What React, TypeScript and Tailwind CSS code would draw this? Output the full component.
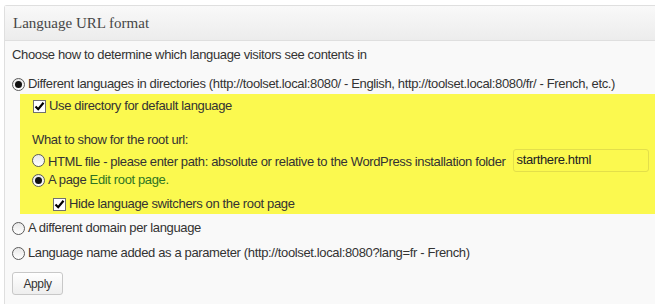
import React from "react";

const Radio = ({ checked }: { checked?: boolean }) => (
  <span className="flex h-[13px] w-[13px] shrink-0 items-center justify-center rounded-full border border-[#5a5a5a] bg-gradient-to-b from-[#e8e8e8] to-white">
    {checked && <span className="h-[7px] w-[7px] rounded-full bg-[#111]" />}
  </span>
);

const Check = () => (
  <span className="flex h-[13px] w-[13px] shrink-0 items-center justify-center border border-[#707070] bg-white">
    <svg width="11" height="11" viewBox="0 0 11 11">
      <path d="M1.5 5.5 L4.2 8.2 L9.5 1.8" fill="none" stroke="#000" strokeWidth="2.2" />
    </svg>
  </span>
);

export default function App() {
  return (
    <div
      className="h-[304px] w-[655px] overflow-hidden whitespace-nowrap bg-white pl-[4px] pt-[5px] text-[13px] tracking-[-0.36px] text-[#333]"
      style={{ fontFamily: '"Liberation Sans", Arial, sans-serif' }}
    >
      <div className="h-[299px] w-[651px] rounded-tl-[3px] border border-r-0 border-b-0 border-[#dfdfdf] bg-[#f9f9f9]">
        <div className="flex h-[35px] items-center border-b border-[#dfdfdf] bg-gradient-to-b from-[#f9f9f9] to-[#ececec] pl-[8px]">
          <span
            className="text-[15px] leading-none tracking-normal text-[#464646]"
            style={{ fontFamily: '"Liberation Serif", Georgia, serif' }}
          >
            Language URL format
          </span>
        </div>
        <div className="pl-[7px] pt-[6px]">
          <div className="h-[16px] leading-[16px]">
            Choose how to determine which language visitors see contents in
          </div>
          <div className="mt-[13px] flex h-[16px] items-center gap-[3px] leading-[16px]">
            <Radio checked />
            <span>
              Different languages in directories (http://toolset.local:8080/ - English,
              http://toolset.local:8080/fr/ - French, etc.)
            </span>
          </div>
          <div className="ml-[8px] mt-[2px] h-[120px] w-[640px] bg-[#fbf94f] pl-[13px] pt-[4px]">
            <div className="flex h-[16px] items-center gap-[3px] leading-[16px]">
              <Check />
              <span>Use directory for default language</span>
            </div>
            <div className="ml-[-1px] mt-[18px] h-[16px] leading-[16px]">What to show for the root url:</div>
            <div className="ml-[-1px] flex h-[24px] items-center gap-[3px]">
              <Radio />
              <span className="mt-[3px] shrink-0 leading-[16px]">
                HTML file - please enter path: absolute or relative to the WordPress installation folder
              </span>
              <span className="ml-[4px] flex h-[23px] w-[136px] shrink-0 items-center rounded-[3px] border border-[#e3df4a] pl-[3px] text-[#222]">
                starthere.html
              </span>
            </div>
            <div className="ml-[-1px] flex h-[16px] items-center gap-[3px] leading-[16px]">
              <Radio checked />
              <span>
                A page <span className="text-[#2f7423]">Edit root page.</span>
              </span>
            </div>
            <div className="ml-[20px] mt-[8px] flex h-[16px] items-center gap-[3px] leading-[16px]">
              <Check />
              <span>Hide language switchers on the root page</span>
            </div>
          </div>
          <div className="mt-[6px] flex h-[16px] items-center gap-[3px] leading-[16px]">
            <Radio />
            <span>A different domain per language</span>
          </div>
          <div className="mt-[9px] flex h-[16px] items-center gap-[3px] leading-[16px]">
            <Radio />
            <span>Language name added as a parameter (http://toolset.local:8080?lang=fr - French)</span>
          </div>
          <button className="mt-[11px] flex h-[23px] w-[51px] items-center justify-center rounded-[3px] border border-[#c8c8c8] bg-gradient-to-b from-white to-[#eeeeee] text-[12px] text-[#333]">
            Apply
          </button>
        </div>
      </div>
    </div>
  );
}
